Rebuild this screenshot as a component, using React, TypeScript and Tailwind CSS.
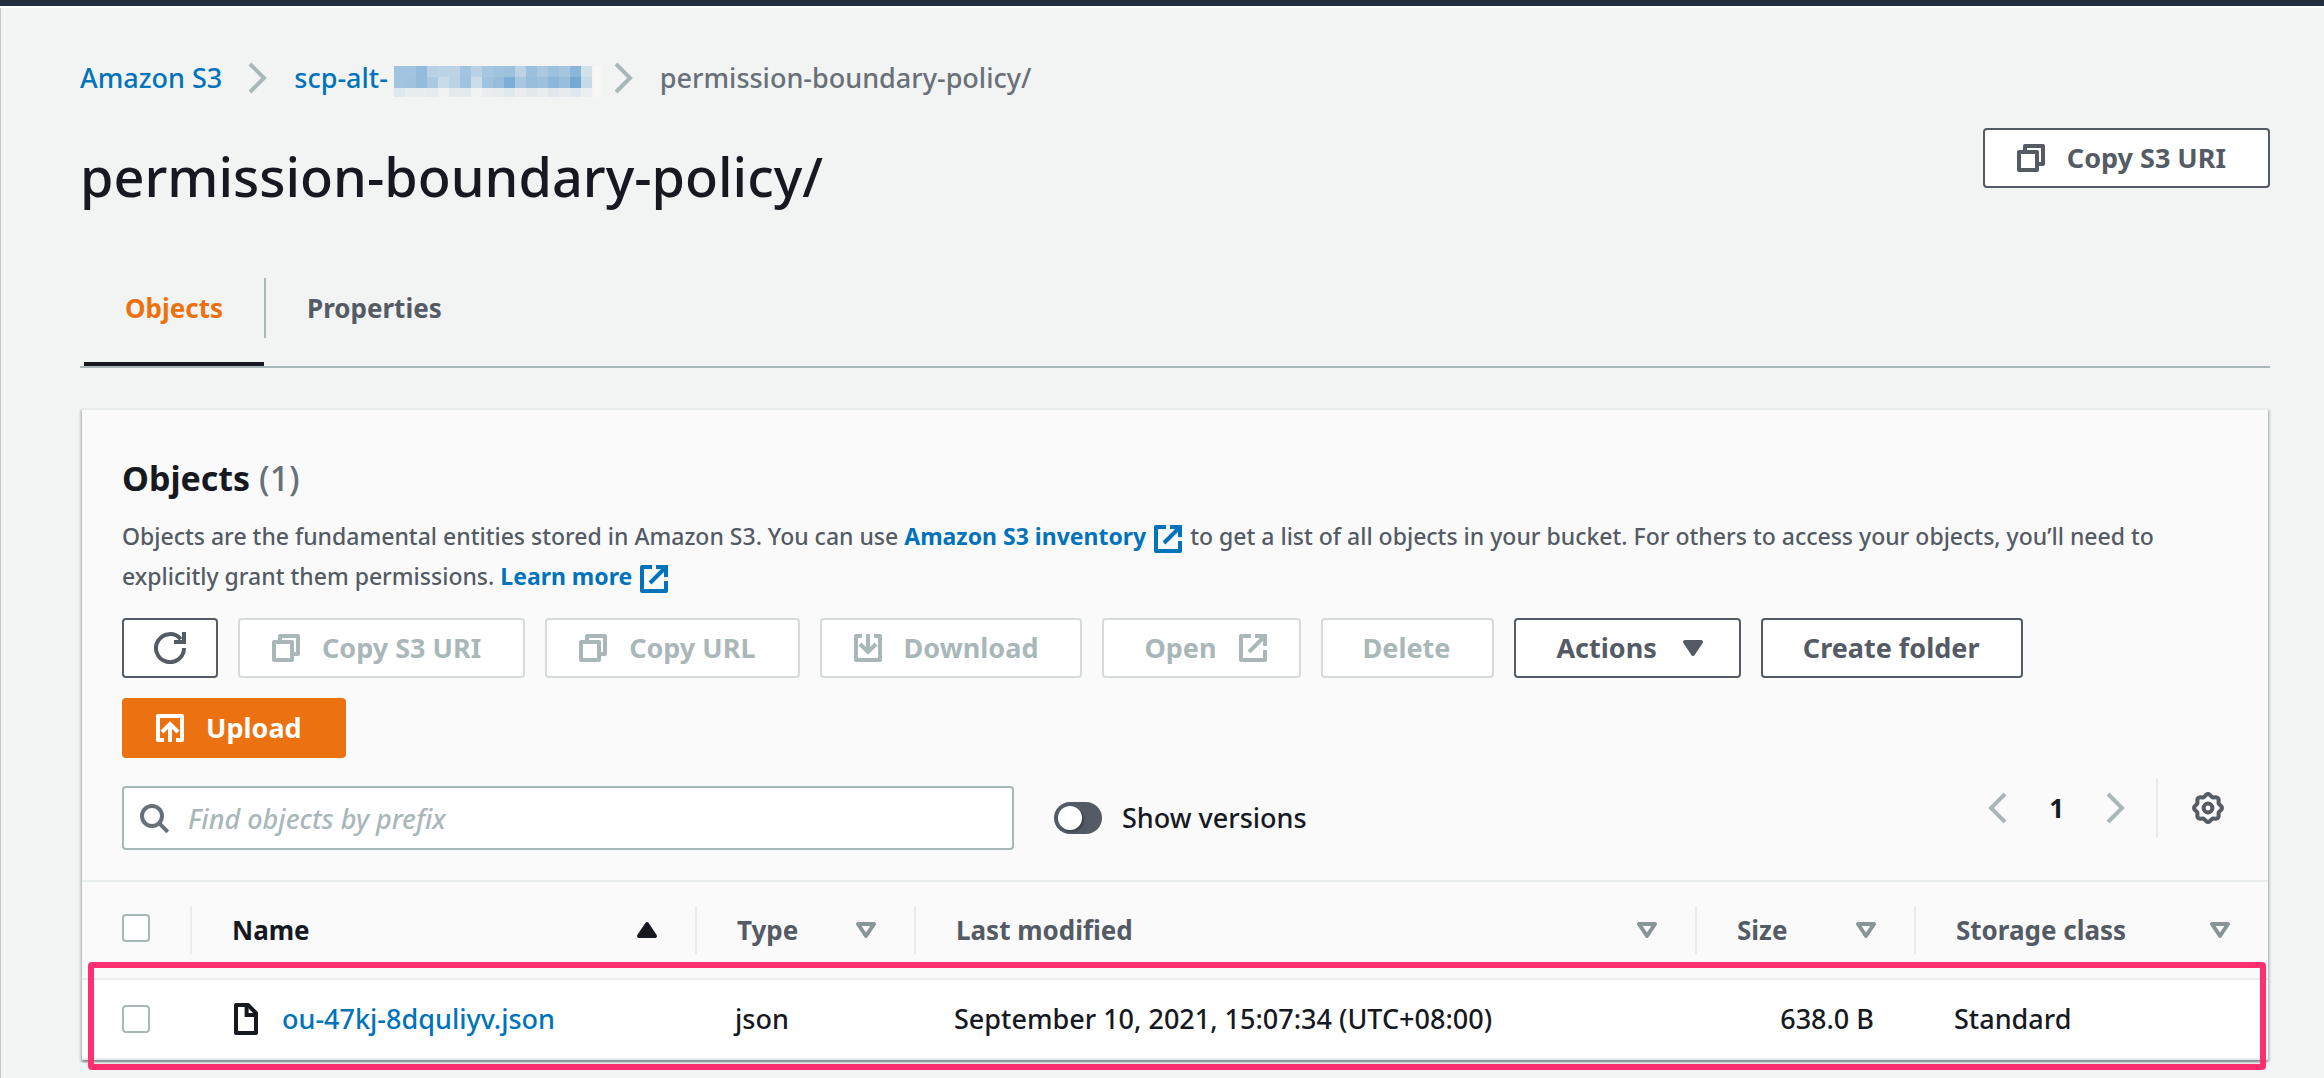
import type { ReactNode } from "react";
import clsx from "clsx";

interface IconProps {
  children: ReactNode;
  className?: string;
}

function Icon({ children, className }: IconProps) {
  return (
    <svg
      viewBox="0 0 16 16"
      fill="none"
      stroke="currentColor"
      strokeWidth="2"
      strokeLinejoin="round"
      className={clsx("h-8 w-8 shrink-0", className)}
      aria-hidden="true"
    >
      {children}
    </svg>
  );
}

const CopyIcon = () => (
  <Icon>
    <path d="M2 5h9v9H2z" />
    <path d="M5 5V2h9v9h-3" />
  </Icon>
);

const ExternalIcon = ({ className }: { className?: string }) => (
  <Icon className={className}>
    <path d="M7 2H2v12h12V9" />
    <path d="M9 2h5v5M13.5 2.5 6 10" strokeLinejoin="miter" />
  </Icon>
);

const DownloadIcon = () => (
  <Icon>
    <path d="M5 2H2v12h12V2h-3" />
    <path d="M8 1v9M4 6l4 4 4-4" strokeLinejoin="miter" />
  </Icon>
);

const UploadIcon = () => (
  <Icon>
    <path d="M5 14H2V2h12v12h-3" />
    <path d="M8 15V6M4 10l4-4 4 4" strokeLinejoin="miter" />
  </Icon>
);

const RefreshIcon = () => (
  <Icon>
    <path d="M15 8a7 7 0 1 1-1.6-4.4" />
    <path d="M15 0v5h-5" strokeLinejoin="miter" />
  </Icon>
);

const SearchIcon = () => (
  <Icon className="text-[#687078]">
    <circle cx="7" cy="7" r="5" />
    <path d="m10.7 10.7 4.2 4.2" />
  </Icon>
);

const FileIcon = () => (
  <Icon>
    <path d="M3 1h6l4 4v10H3z" />
    <path d="M8.3 1v5H13" strokeLinejoin="miter" />
  </Icon>
);

const ChevronRight = () => (
  <Icon className="text-[#aab7b8]">
    <path d="m4 1 7 7-7 7" strokeLinejoin="miter" />
  </Icon>
);

const ChevronLeft = () => (
  <Icon className="text-[#aab7b8]">
    <path d="M12 1 5 8l7 7" strokeLinejoin="miter" />
  </Icon>
);

const CaretDown = () => (
  <Icon>
    <path d="M4 5h8l-4 6z" fill="currentColor" />
  </Icon>
);

const SortAsc = () => (
  <Icon>
    <path d="M8 5l4 6H4z" fill="currentColor" />
  </Icon>
);

const SortNone = () => (
  <Icon className="text-[#879596]">
    <path d="M4 5h8l-4 6z" />
  </Icon>
);

// eight-lobed cog outline
const gearPoints = Array.from({ length: 96 }, (_, i) => {
  const a = (i / 96) * Math.PI * 2;
  const r = 6.4 + 0.6 * Math.cos(8 * a);
  return `${(8 + r * Math.sin(a)).toFixed(2)},${(8 - r * Math.cos(a)).toFixed(2)}`;
}).join(" ");

const GearIcon = () => (
  <Icon>
    <polygon points={gearPoints} />
    <circle cx="8" cy="8" r="2.2" />
  </Icon>
);

const MASK = [
  ["#a0c3de", "#9fc4df", "#93bbdc", "#b9d1e4", "#bcd3e5", "#bcd3e5", "#a1c5e0", "#b9d1e4", "#a7c7e0", "#a0c4de", "#9bc1dd", "#bcd3e6", "#9bc0dd", "#aac8e0", "#9bc1dd", "#a5c6df", "#8ab6d8", "#d3e1eb"],
  ["#a0c4df", "#9ec3de", "#93bbdc", "#a8c9e0", "#c8dbe9", "#b9d2e5", "#a0c4df", "#cbdde9", "#9fc3de", "#98bddb", "#7bafd6", "#a8c8e0", "#97bddc", "#9cc1de", "#8cb7d9", "#98bddb", "#73a9d2", "#c6dae8"],
  ["#dde8ed", "#e8edf0", "#e8edf0", "#e5ebef", "#f2f2f2", "#e3eaed", "#e3eaed", "#f2f2f2", "#e8edf0", "#e7ecef", "#dfe8ed", "#e9edf0", "#e1e9ed", "#e8edf0", "#e0e8ee", "#e5ebee", "#dfe8ee", "#ebeff0"],
];

// Pixelated account id
function MaskedId() {
  return (
    <svg width="208" height="31" viewBox="0 0 208 31" shapeRendering="crispEdges" className="mt-1.5 -mr-3.5 ml-1.5 shrink-0" aria-hidden="true">
      <rect x="199" width="9" height="31" fill="#f7f6f5" />
      {MASK.map((row, y) =>
        row.map((fill, x) => (
          <rect key={`${x}-${y}`} x={x * 11} y={y * 11} width="11" height={y === 2 ? 9 : 11} fill={fill} />
        )),
      )}
    </svg>
  );
}

interface ButtonProps {
  children?: ReactNode;
  icon?: ReactNode;
  iconRight?: ReactNode;
  disabled?: boolean;
  primary?: boolean;
  label?: string;
}

function Button({ children, icon, iconRight, disabled, primary, label }: ButtonProps) {
  return (
    <button
      type="button"
      disabled={disabled}
      aria-label={label}
      className={clsx(
        "flex h-[60px] items-center gap-5 rounded-sm border-2 text-[27px] font-bold whitespace-nowrap",
        icon ? "pl-[30px]" : "pl-10",
        iconRight || !children ? "pr-[30px]" : "pr-[42px]",
        primary
          ? "border-[#ec7211] bg-[#ec7211] text-white"
          : disabled
            ? "border-[#d5dbdb] bg-white text-[#aab7b8]"
            : "border-[#545b64] bg-white text-[#545b64]",
      )}
    >
      {icon}
      {children && <span>{children}</span>}
      {iconRight}
    </button>
  );
}

function Checkbox({ label }: { label: string }) {
  return (
    <input
      type="checkbox"
      aria-label={label}
      className="block h-7 w-7 appearance-none rounded-sm border-2 border-[#aab7b8] bg-white checked:bg-[#0073bb]"
    />
  );
}

interface Column {
  name: string;
  width: string;
  sorted?: boolean;
}

const columns: Column[] = [
  { name: "Name", width: "w-[505px]", sorted: true },
  { name: "Type", width: "w-[219px]" },
  { name: "Last modified", width: "" },
  { name: "Size", width: "w-[219px]" },
  { name: "Storage class", width: "w-[354px]" },
];

const objects = [
  {
    name: "ou-47kj-8dquliyv.json",
    type: "json",
    modified: "September 10, 2021, 15:07:34 (UTC+08:00)",
    size: "638.0 B",
    storage: "Standard",
  },
];

function ObjectsTable() {
  return (
    <table className="w-full table-fixed border-collapse text-left text-[27px]">
      <thead>
        <tr className="border-y-2 border-[#eaeded]">
          <th className="w-[108px] pb-1 pl-10">
            <Checkbox label="Select all objects" />
          </th>
          {columns.map((col) => (
            <th key={col.name} className={clsx("py-6", col.width)} aria-sort={col.sorted ? "ascending" : "none"}>
              <button
                type="button"
                className={clsx(
                  "flex h-12 w-full items-center justify-between border-l-2 border-[#eaeded] pr-8 pl-10 text-[26px] font-bold",
                  col.sorted ? "text-[#16191f]" : "text-[#545b64]",
                )}
              >
                {col.name}
                {col.sorted ? <SortAsc /> : <SortNone />}
              </button>
            </th>
          ))}
        </tr>
      </thead>
      <tbody>
        {objects.map((obj) => (
          <tr key={obj.name} className="h-20 border-b-2 border-[#eaeded] bg-white">
            <td className="pl-10">
              <Checkbox label={`Select ${obj.name}`} />
            </td>
            <td className="pl-10">
              <span className="flex items-center gap-5">
                <FileIcon />
                <a href="#object" className="text-[#0073bb]">
                  {obj.name}
                </a>
              </span>
            </td>
            <td className="pl-10">{obj.type}</td>
            <td className="pl-10">{obj.modified}</td>
            <td className="pr-10 text-right">{obj.size}</td>
            <td className="pl-10">{obj.storage}</td>
          </tr>
        ))}
      </tbody>
    </table>
  );
}

export default function App() {
  return (
    <div className="flex min-h-screen flex-col bg-[#f2f3f3] font-['Noto_Sans',sans-serif] font-medium text-[#16191f]">
      <div className="h-2 border-b-2 border-white bg-[#232f3e]" />
      <main className="grow border-l border-[#c4c8c8] pt-[50px] pr-[54px] pl-[79px]">
        <nav aria-label="Breadcrumbs">
          <ol className="flex h-10 items-center gap-5 text-[27px]">
            <li>
              <a href="#s3" className="text-[#0073bb]">Amazon S3</a>
            </li>
            <li className="flex items-center gap-5">
              <ChevronRight />
              <a href="#bucket" className="flex items-center text-[#0073bb]">
                scp-alt-
                <MaskedId />
              </a>
            </li>
            <li className="flex items-center gap-5 text-[#687078]">
              <ChevronRight />
              permission-boundary-policy/
            </li>
          </ol>
        </nav>

        <header className="mt-[30px] flex items-start justify-between">
          <h1 className="pt-3 text-[54px] leading-[72px]">permission-boundary-policy/</h1>
          <Button icon={<CopyIcon />}>Copy S3 URI</Button>
        </header>

        <div role="tablist" className="mt-[66px] flex border-b-2 border-[#aab7b8] pl-1 text-[26px] font-bold">
          <button type="button" role="tab" aria-selected="true" className="border-b-4 border-[#16191f] pb-6 text-[#ec7211]">
            <span className="flex h-[60px] items-center px-[41px]">Objects</span>
          </button>
          <button type="button" role="tab" aria-selected="false" className="pb-7 text-[#545b64]">
            <span className="flex h-[60px] items-center border-l-2 border-[#aab7b8] px-[41px]">Properties</span>
          </button>
        </div>

        <section className="relative mx-0.5 mt-10 border-t-2 border-[#eaeded] bg-[#fafafa] shadow-[0_2px_2px_0_rgba(0,28,36,0.3),2px_2px_2px_0_rgba(0,28,36,0.15),-2px_2px_2px_0_rgba(0,28,36,0.15)]">
          <div className="px-10 pt-[46px] pb-[30px]">
            <h2 className="text-[34px] leading-[44px] font-bold">
              Objects <span className="font-medium text-[#687078]">(1)</span>
            </h2>
            <p className="mt-4 pr-8 text-[23px] leading-10 text-[#545b64]">
              Objects are the fundamental entities stored in Amazon S3. You can use{" "}
              <a href="#inventory" className="font-bold whitespace-nowrap text-[#0073bb]">
                Amazon S3 inventory <ExternalIcon className="inline-block" />
              </a>{" "}
              to get a list of all objects in your bucket. For others to access your objects, you’ll need to explicitly
              grant them permissions.{" "}
              <a href="#learn" className="font-bold whitespace-nowrap text-[#0073bb]">
                Learn more <ExternalIcon className="inline-block" />
              </a>
            </p>

            {/* Actions */}
            <div className="mt-[22px] flex flex-wrap gap-5">
              <Button icon={<RefreshIcon />} label="Refresh" />
              <Button icon={<CopyIcon />} disabled>Copy S3 URI</Button>
              <Button icon={<CopyIcon />} disabled>Copy URL</Button>
              <Button icon={<DownloadIcon />} disabled>Download</Button>
              <Button iconRight={<ExternalIcon />} disabled>Open</Button>
              <Button disabled>Delete</Button>
              <Button iconRight={<CaretDown />}>Actions</Button>
              <Button>Create folder</Button>
              <Button icon={<UploadIcon />} primary>Upload</Button>
            </div>

            {/* Filter and paging */}
            <div className="mt-5 flex items-start">
              <div className="mt-2 flex grow items-center gap-10">
                <label className="flex h-16 w-[892px] items-center gap-[18px] rounded-sm border-2 border-[#aab7b8] bg-white pl-3.5">
                  <SearchIcon />
                  <input
                    type="search"
                    aria-label="Find objects by prefix"
                    placeholder="Find objects by prefix"
                    className="h-full grow bg-transparent text-[27px] outline-none placeholder:text-[#aab7b8] placeholder:italic"
                  />
                </label>
                <label className="flex items-center gap-5 text-[27px]">
                  <input
                    type="checkbox"
                    role="switch"
                    className="flex h-8 w-12 appearance-none items-center rounded-full bg-[#545b64] px-1 before:h-6 before:w-6 before:rounded-full before:bg-white before:shadow-[2px_2px_2px_rgba(0,0,0,0.25)] checked:justify-end"
                  />
                  Show versions
                </label>
              </div>
              <div className="flex h-[60px] items-center pr-1">
                <button type="button" aria-label="Previous page" disabled>
                  <ChevronLeft />
                </button>
                <button type="button" className="mx-9 text-[26px] font-bold">1</button>
                <button type="button" aria-label="Next page" disabled>
                  <ChevronRight />
                </button>
                <span className="mr-[34px] ml-6 h-full border-l-2 border-[#eaeded]" />
                <button type="button" aria-label="Preferences" className="text-[#545b64]">
                  <GearIcon />
                </button>
              </div>
            </div>
          </div>

          <ObjectsTable />

          {/* Highlight over the object row */}
          <div className="pointer-events-none absolute right-0.5 -bottom-2.5 left-1.5 h-[108px] rounded-sm border-6 border-[#ff2e6e]" />
        </section>
      </main>
    </div>
  );
}
